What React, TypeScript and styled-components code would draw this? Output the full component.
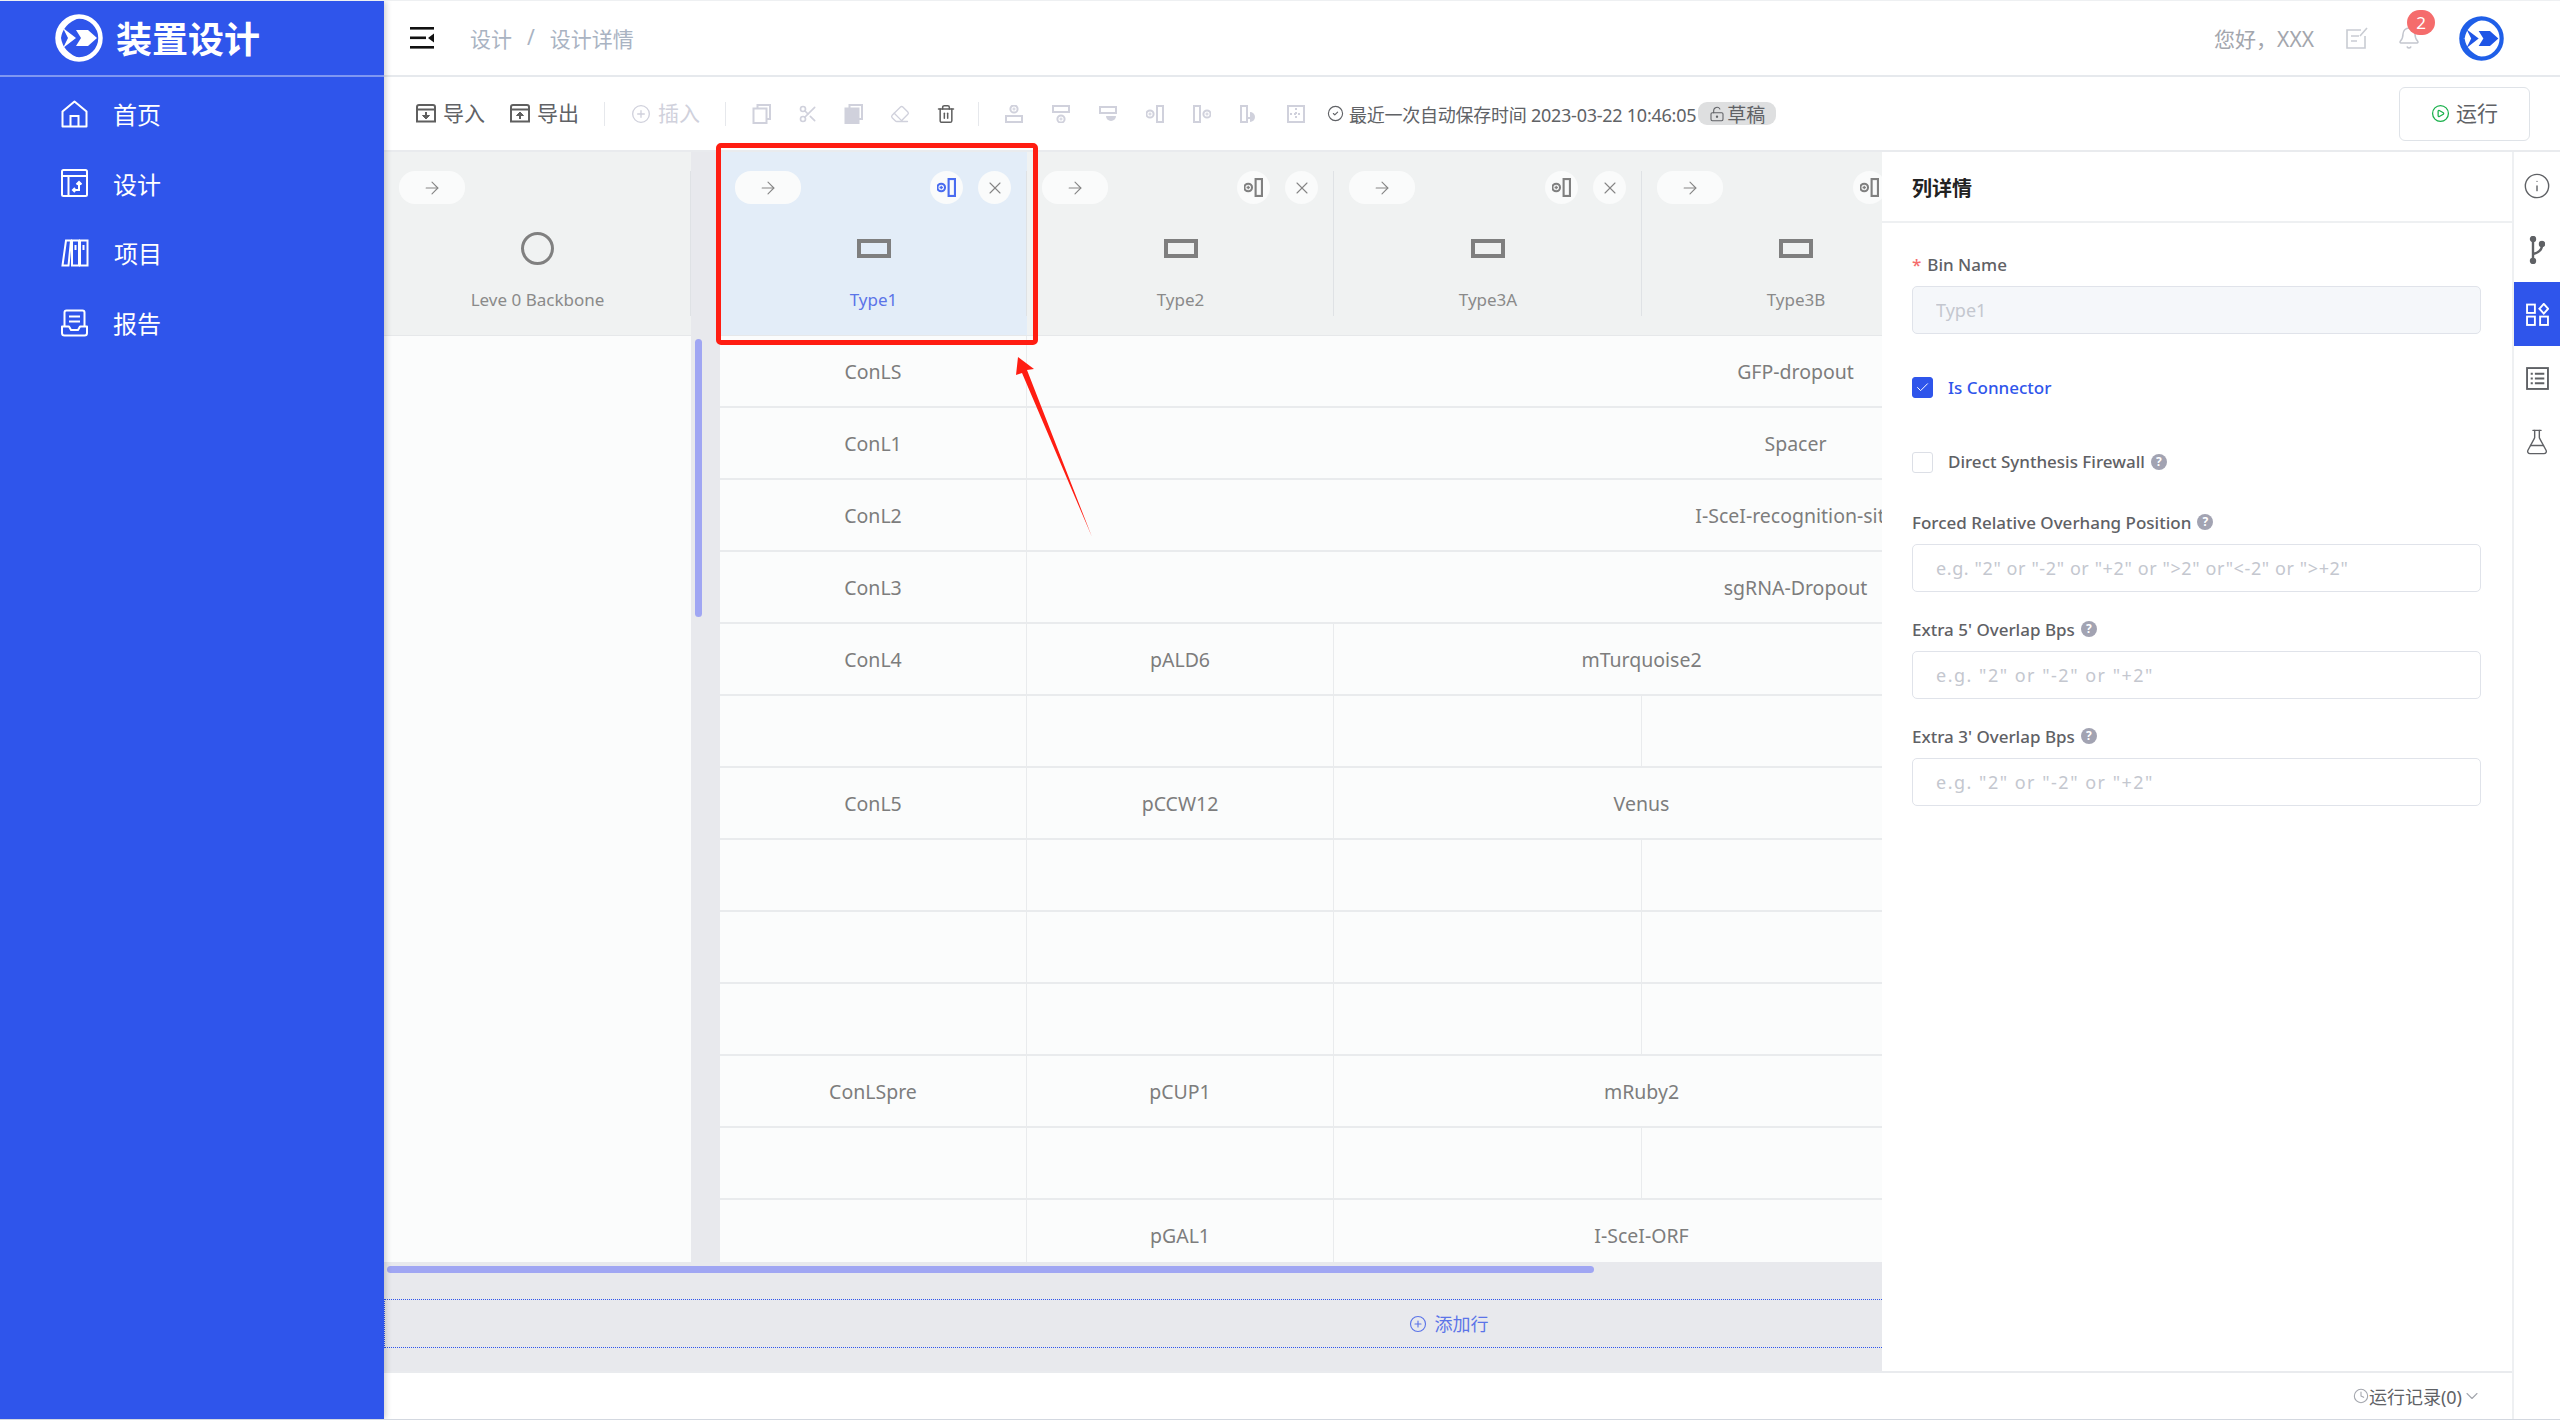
import React, { FC } from 'react';
import styled, { createGlobalStyle } from 'styled-components';
import {
  ArrowRight,
  Bell,
  Check,
  ChevronDown,
  CircleCheck,
  CirclePlay,
  CirclePlus,
  Clock,
  Eraser,
  FlaskConical,
  Info,
  LockKeyholeOpen,
  Scissors,
  Trash2,
  X,
} from 'lucide-react';

const BLUE = '#2f55eb';
const DISABLED = '#d0d1dc';

const GlobalStyle = createGlobalStyle`
  html, body {
    margin: 0;
    padding: 0;
    background: #fff;
  }
  body {
    font-family: "Noto Sans", "Noto Sans CJK SC", sans-serif;
    color: #606266;
  }
  * {
    box-sizing: border-box;
  }
`;

const Page = styled.div`
  position: relative;
  display: flex;
  width: 2560px;
  height: 1420px;
  overflow: hidden;
  border-top: 1px solid #eef0f2;
  border-bottom: 1px solid #d3d8e0;
`;

const Sidebar = styled.aside`
  position: relative;
  z-index: 2;
  flex: 0 0 384px;
  background: ${BLUE};
  box-shadow: 2px 0 6px rgba(0, 0, 0, 0.18);
`;

const Brand = styled.div`
  display: flex;
  align-items: center;
  gap: 13px;
  height: 76px;
  padding-left: 55px;
  border-bottom: 2px solid #7f97f2;
`;

const BrandName = styled.span`
  padding-top: 3px;
  color: #fff;
  font-size: 36px;
  font-weight: 700;
  line-height: 1;
`;

const Menu = styled.nav`
  padding-top: 2px;
`;

const MenuItem = styled.a`
  display: flex;
  align-items: center;
  gap: 25px;
  height: 69.6px;
  padding-left: 61px;
  color: #fff;
  font-size: 24px;
`;

const Main = styled.div`
  flex: 1;
  min-width: 0;
  display: flex;
  flex-direction: column;
`;

const TopBar = styled.header`
  flex: 0 0 76px;
  display: flex;
  align-items: center;
  padding: 0 56px 0 26px;
  border-bottom: 2px solid #e6e9ed;
`;

const Crumbs = styled.div`
  display: flex;
  gap: 15px;
  margin-left: 36px;
  color: #a9b3c2;
  font-size: 21px;
`;

const Greeting = styled.span`
  margin-left: auto;
  color: #a3a6ad;
  font-size: 21px;
`;

const NoteSlot = styled.span`
  display: flex;
  margin-left: 32px;
`;

const BellWrap = styled.span`
  position: relative;
  display: flex;
  margin: 0 38px 0 29px;
`;

const Badge = styled.span`
  position: absolute;
  left: 10px;
  top: -16px;
  width: 28px;
  height: 25px;
  border-radius: 13px;
  background: #f56c6c;
  color: #fff;
  font-size: 17px;
  line-height: 25px;
  text-align: center;
`;

const Toolbar = styled.div`
  flex: 0 0 75px;
  display: flex;
  align-items: center;
  padding: 0 30px 0 32px;
  border-bottom: 2px solid #e9ebee;
`;

const ToolButton = styled.span<{ $disabled?: boolean }>`
  display: flex;
  align-items: center;
  gap: 7px;
  margin-right: 25px;
  color: ${(p) => (p.$disabled ? DISABLED : '#606266')};
  font-size: 21px;
  line-height: 23px;
  white-space: nowrap;
`;

const ToolDivider = styled.span`
  width: 1px;
  height: 24px;
  margin: 0 26px 0 0;
  background: #e6e8ec;
`;

const IconRow = styled.span<{ $gap: number }>`
  display: flex;
  align-items: center;
  gap: ${(p) => p.$gap}px;
  margin-right: 22px;
`;

const SaveStatus = styled.span`
  display: flex;
  align-items: center;
  gap: 5px;
  color: #606266;
  font-size: 18px;
  letter-spacing: -0.25px;
  white-space: nowrap;
`;

const DraftTag = styled.span`
  display: flex;
  align-items: center;
  gap: 2px;
  height: 23px;
  margin-left: -3px;
  padding: 0 11px;
  border-radius: 9px;
  background: #dedfe0;
  font-size: 19px;
  letter-spacing: 0;
`;

const RunButton = styled.button`
  display: flex;
  align-items: center;
  justify-content: center;
  gap: 6px;
  width: 131px;
  height: 54px;
  margin-left: auto;
  border: 1px solid #dfe3e8;
  border-radius: 6px;
  background: #fff;
  color: #606266;
  font: inherit;
  font-size: 21px;
  line-height: 23px;
`;

const Content = styled.div`
  flex: 1;
  min-height: 0;
  display: flex;
`;

const Workspace = styled.div`
  flex: 1;
  min-width: 0;
  display: flex;
  flex-direction: column;
`;

const WorkRow = styled.div`
  flex: 1;
  min-height: 0;
  display: flex;
`;

const Designer = styled.section`
  flex: 0 0 1498px;
  width: 1498px;
  min-width: 0;
  display: flex;
  flex-direction: column;
  background: #e8e9ed;
`;

const Board = styled.div`
  flex: 0 0 1110px;
  min-width: 0;
  display: flex;
  overflow: hidden;
`;

const BackboneColumn = styled.div`
  flex: 0 0 307px;
  background: #fbfcfc;
`;

const Gutter = styled.div`
  flex: 0 0 29px;
  padding: 187px 0 0 4px;
  background: #e8e9ed;
`;

const VerticalThumb = styled.div`
  width: 7px;
  height: 278px;
  border-radius: 4px;
  background: #a0a6f3;
`;

const TypeArea = styled.div`
  flex: 1;
  min-width: 0;
  overflow: hidden;
`;

const ColumnGrid = styled.div`
  display: grid;
  width: 1845px;
  grid-template-columns: 307px 307px 308px 308px 308px 307px;
`;

const Head = styled.div<{ $active?: boolean }>`
  position: relative;
  display: flex;
  flex-direction: column;
  align-items: center;
  height: 184px;
  padding-top: 19px;
  background: ${(p) => (p.$active ? '#e3edf8' : '#f0f2f2')};
  border-bottom: 1px solid #e6e8ea;
  color: ${(p) => (p.$active ? '#5b74e8' : '#8a8a8a')};
  font-size: 17px;
  line-height: 24px;

  &::after {
    content: '';
    position: absolute;
    top: 19px;
    right: 0;
    bottom: 19px;
    width: 1px;
    background: #dfe2e5;
  }
`;

const HeadActions = styled.div`
  align-self: stretch;
  display: flex;
  gap: 15px;
  padding: 0 16px 0 15px;
`;

const PillButton = styled.span`
  display: flex;
  align-items: center;
  justify-content: center;
  width: 66px;
  height: 33px;
  margin-right: auto;
  border-radius: 16px;
  background: #fafbfb;
`;

const RoundButton = styled.span`
  display: flex;
  align-items: center;
  justify-content: center;
  width: 33px;
  height: 33px;
  border-radius: 50%;
  background: #fafbfb;
`;

const HeadGlyph = styled.div`
  display: flex;
  align-items: center;
  justify-content: center;
  height: 33px;
  margin: 28px 0 23px;
`;

const BackboneGlyph = styled.span`
  width: 33px;
  height: 33px;
  border: 3px solid #808080;
  border-radius: 50%;
`;

const PartGlyph = styled.span`
  width: 34px;
  height: 19px;
  border: 4px solid #7f7f7f;
`;

const Cell = styled.div<{ $span?: number }>`
  grid-column: span ${(p) => p.$span ?? 1};
  height: 72px;
  border-right: 1px solid #e9ebed;
  border-bottom: 2px solid #e9ebed;
  background: #fbfcfc;
  color: #7d7d7d;
  font-size: 19.5px;
  line-height: 72px;
  text-align: center;
  white-space: nowrap;
`;

const BoardFooter = styled.div`
  flex: 1;
  display: flex;
  flex-direction: column;
  padding-top: 4px;
`;

const HorizontalThumb = styled.div`
  width: 1207px;
  height: 7px;
  margin-left: 3px;
  border-radius: 4px;
  background: #a0a6f3;
`;

const AddRow = styled.div`
  display: flex;
  align-items: center;
  justify-content: center;
  gap: 8px;
  height: 49px;
  margin-top: 26px;
  padding-left: 630px;
  border: 1px dotted ${BLUE};
  border-right: 0;
  color: #5b74e8;
  font-size: 18px;
  line-height: 1;
`;

const DetailPanel = styled.aside`
  flex: 1;
  min-width: 0;
  background: #fff;
`;

const PanelTitle = styled.h2`
  display: flex;
  align-items: center;
  height: 71px;
  margin: 0;
  padding: 2px 30px 0;
  border-bottom: 2px solid #eef0f2;
  color: #222;
  font-size: 20px;
  font-weight: 700;
`;

const Form = styled.form`
  padding: 30px 31px 0 30px;
`;

const FieldLabel = styled.label<{ $top?: number }>`
  display: flex;
  align-items: center;
  gap: 6px;
  height: 24px;
  margin-top: ${(p) => p.$top ?? 0}px;
  padding-bottom: 2px;
  color: #5f6165;
  font-size: 17px;
  font-weight: 500;
  white-space: nowrap;
`;

const Required = styled.span`
  color: #f56c6c;
`;

const Help = styled.span`
  width: 16px;
  height: 16px;
  border-radius: 50%;
  background: #a2a3b2;
  color: #fff;
  font-size: 12px;
  font-weight: 700;
  line-height: 16px;
  text-align: center;
`;

const TextInput = styled.input<{ $spread?: number }>`
  display: block;
  width: 100%;
  height: 48px;
  margin-top: 9px;
  padding: 0 23px;
  border: 1px solid #e0e3ea;
  border-radius: 5px;
  background: #fff;
  font: inherit;
  font-size: 18px;
  letter-spacing: ${(p) => p.$spread ?? 0}px;
  outline: none;

  &::placeholder {
    color: #c4c7cf;
  }

  &:disabled {
    background: #f5f7fa;
  }
`;

const CheckRow = styled.div<{ $top: number; $checked?: boolean }>`
  display: flex;
  align-items: center;
  gap: 15px;
  height: 24px;
  margin-top: ${(p) => p.$top}px;
  padding-bottom: 1px;
  color: ${(p) => (p.$checked ? BLUE : '#5f6165')};
  font-size: 17px;
  font-weight: 500;
`;

const CheckBox = styled.span<{ $checked?: boolean }>`
  display: flex;
  align-items: center;
  justify-content: center;
  width: 21px;
  height: 21px;
  border: 1px solid ${(p) => (p.$checked ? BLUE : '#dcdfe6')};
  border-radius: 3px;
  background: ${(p) => (p.$checked ? BLUE : '#fff')};
`;

const FooterBar = styled.footer`
  flex: 0 0 48px;
  display: flex;
  align-items: center;
  justify-content: flex-end;
  padding-right: 30px;
  border-top: 2px solid #e9ebee;
  color: #606266;
  font-size: 18px;
`;

const Rail = styled.nav`
  flex: 0 0 48px;
  border-left: 2px solid #eef0f2;
  padding-top: 2px;
`;

const RailItem = styled.span<{ $active?: boolean }>`
  display: flex;
  align-items: center;
  justify-content: center;
  height: 64px;
  background: ${(p) => (p.$active ? BLUE : 'transparent')};
  color: ${(p) => (p.$active ? '#fff' : '#5f6165')};
`;

const Highlight = styled.div`
  position: absolute;
  z-index: 3;
  left: 716px;
  top: 142px;
  width: 322px;
  height: 202px;
  border: 5px solid #ff1d12;
  border-radius: 5px;
`;

const Pointer = styled.svg`
  position: absolute;
  z-index: 3;
  left: 1010px;
  top: 349px;
`;

type Glyph = { size?: number; color?: string };

const LogoMark: FC<{ size: number; ring: string; mark: string; disc: string }> = ({ size, ring, mark, disc }) => (
  <svg width={size} height={size} viewBox="0 0 48 48">
    <circle cx="24" cy="24" r="21.5" fill={disc} stroke={ring} strokeWidth="4.5" />
    <path d="M6 24 Q8 10 24 4 L24 1 Q3 3 1 24Z" fill={ring} />
    <path d="M6 24 Q8 38 24 44 L24 47 Q3 45 1 24Z" fill={ring} />
    <path d="M8 14 L21 24 L8 34 L13 24Z" fill={mark} />
    <path d="M21 16 H33 L42 24 L33 32 H21 L26 24Z" fill={mark} />
  </svg>
);

const Hamburger: FC = () => (
  <svg width="24" height="22" viewBox="0 0 24 22" fill="#111">
    <rect x="0" y="0" width="24" height="2.6" />
    <rect x="0" y="9.5" width="16" height="2.6" />
    <rect x="0" y="19" width="24" height="2.6" />
    <path d="M24 6.5 V15.5 L18 11Z" />
  </svg>
);

const HomeIcon: FC = () => (
  <svg width="27" height="28" viewBox="0 0 27 28" fill="none" stroke="#fff" strokeWidth="2">
    <path d="M1.5 11.5 L13.5 1.5 L25.5 11.5 V26.5 H1.5Z" strokeLinejoin="round" />
    <path d="M9.5 26.5 V16 H17.5 V26.5" />
  </svg>
);

const DesignIcon: FC = () => (
  <svg width="27" height="28" viewBox="0 0 27 28" fill="none" stroke="#fff" strokeWidth="2">
    <rect x="1" y="1" width="25" height="26" rx="1.5" />
    <path d="M1 7 H26 M7.5 7 V27" />
    <path d="M12 21 H18 V13 M15.5 15.5 L18 13 L20.5 15.5 M14 19 L12 21 L14 23" />
  </svg>
);

const ProjectIcon: FC = () => (
  <svg width="28" height="28" viewBox="0 0 28 28" fill="none" stroke="#fff" strokeWidth="2">
    <path d="M1.5 26.5 L5 1.5 H10 L7.5 26.5Z" />
    <rect x="11" y="1.5" width="7" height="25" />
    <rect x="19" y="1.5" width="7.5" height="25" />
    <path d="M14.5 6 V11 M22.5 6 V11" />
  </svg>
);

const ReportIcon: FC = () => (
  <svg width="27" height="28" viewBox="0 0 27 28" fill="none" stroke="#fff" strokeWidth="2">
    <path d="M3.5 17 V3.5 Q3.5 1.5 5.5 1.5 H21.5 Q23.5 1.5 23.5 3.5 V17" />
    <path d="M8 7.5 H19 M8 12.5 H19" />
    <path d="M1 17.5 H8 L10 21 H17 L19 17.5 H26 V24 Q26 26.5 23.5 26.5 H3.5 Q1 26.5 1 24Z" strokeLinejoin="round" />
  </svg>
);

const ArchiveIcon: FC<{ up?: boolean }> = ({ up }) => (
  <svg width="20" height="19" viewBox="0 0 20 19" fill="none" stroke="#5f5f5f" strokeWidth="2">
    <path d="M1 17.5 V3 Q1 1 3 1 H17 Q19 1 19 3 V17.5Z" />
    <path d="M1 5.5 H19" />
    <path d={up ? 'M10 15 V9' : 'M10 8 V14'} />
    <path d={up ? 'M6.5 11.5 L10 8 L13.5 11.5Z' : 'M6.5 11.5 L10 15 L13.5 11.5Z'} fill="#5f5f5f" strokeWidth="1" />
  </svg>
);

const CopyIcon: FC<{ filled?: boolean }> = ({ filled }) => (
  <svg width="20" height="20" viewBox="0 0 20 20" fill="none" stroke={DISABLED} strokeWidth="2">
    <path d="M5.5 4.5 V1 H18 V15 H14.5" />
    <rect x="1.5" y="4.5" width="13" height="14.5" fill={filled ? DISABLED : 'none'} />
  </svg>
);

const PlusDot: FC<{ cx: number; cy: number; color: string; r?: number }> = ({ cx, cy, color, r = 3.6 }) => (
  <g>
    <circle cx={cx} cy={cy} r={r} fill="none" stroke={color} strokeWidth="2" />
    <path d={`M${cx - 1.6} ${cy} H${cx + 1.6} M${cx} ${cy - 1.6} V${cy + 1.6}`} stroke={color} strokeWidth="1.2" />
  </g>
);

const TableTool: FC<{ kind: string; color?: string; size?: number }> = ({ kind, color = DISABLED, size = 18 }) => {
  const line = { fill: 'none', stroke: color, strokeWidth: 2 };
  return (
    <svg width={size} height={size} viewBox="0 0 18 18">
      {kind === 'rowAbove' && (
        <>
          <PlusDot cx={9} cy={4} color={color} />
          <rect x="1" y="11" width="16" height="6" {...line} />
        </>
      )}
      {kind === 'rowBelow' && (
        <>
          <rect x="1" y="1" width="16" height="6" {...line} />
          <PlusDot cx={9} cy={14} color={color} />
        </>
      )}
      {kind === 'rowDelete' && (
        <>
          <rect x="1" y="2" width="16" height="6" {...line} />
          <path d="M7 11 H17 A5 5 0 0 1 7 11Z" fill={color} />
        </>
      )}
      {kind === 'colLeft' && (
        <>
          <PlusDot cx={4} cy={9} color={color} />
          <rect x="11" y="1" width="6" height="16" {...line} />
        </>
      )}
      {kind === 'colRight' && (
        <>
          <rect x="1" y="1" width="6" height="16" {...line} />
          <PlusDot cx={14} cy={9} color={color} />
        </>
      )}
      {kind === 'colDelete' && (
        <>
          <rect x="1" y="1" width="6" height="16" {...line} />
          <path d="M10 7 A5 5 0 0 1 10 17Z" fill={color} />
          <path d="M7 13 H10" stroke={color} strokeWidth="2" />
        </>
      )}
      {kind === 'merge' && (
        <>
          <rect x="1" y="1" width="16" height="16" {...line} />
          <path d="M9 3 V15 M3 9 H15" stroke={color} strokeWidth="2" strokeDasharray="2 2" />
        </>
      )}
    </svg>
  );
};

const NoteIcon: FC<Glyph> = ({ color = '#c9ccd3' }) => (
  <svg width="22" height="22" viewBox="0 0 22 22" fill="none" stroke={color} strokeWidth="1.6">
    <path d="M15 3 H1 V21 H19 V9" />
    <path d="M5 9 H13 M5 14 H11 M14 9 L21 1" />
  </svg>
);

const BranchIcon: FC = () => (
  <svg width="16" height="28" viewBox="0 0 16 28" fill="none" stroke="#5f6165" strokeWidth="2.4">
    <path d="M4 3 V25" />
    <path d="M4 18 Q13 16 13 9" />
    <circle cx="4" cy="3" r="2" fill="#5f6165" />
    <circle cx="4" cy="25" r="2" fill="#5f6165" />
    <circle cx="13" cy="8" r="2" fill="#5f6165" />
  </svg>
);

const ShapesIcon: FC = () => (
  <svg width="23" height="23" viewBox="0 0 22 22" fill="none" stroke="#fff" strokeWidth="1.8">
    <rect x="1" y="1.5" width="7.5" height="8" />
    <rect x="1" y="13" width="7.5" height="8" />
    <rect x="13.5" y="13" width="7.5" height="8" />
    <path d="M17 0.8 L21.2 5.5 L17 10.2 L12.8 5.5Z" />
  </svg>
);

const ListIcon: FC = () => (
  <svg width="23" height="23" viewBox="0 0 22 22" fill="none" stroke="#5f6165" strokeWidth="1.8">
    <rect x="1" y="1" width="20" height="20" />
    <path d="M4.5 6.5 H6.5 M4.5 11 H6.5 M4.5 15.5 H6.5 M8.5 6.5 H17.5 M8.5 11 H17.5 M8.5 15.5 H17.5" />
  </svg>
);

const Arrow: FC = () => <ArrowRight size={20} color="#858585" strokeWidth={1.3} />;

interface TypeColumn {
  name: string;
  active?: boolean;
}

const typeColumns: TypeColumn[] = [
  { name: 'Type1', active: true },
  { name: 'Type2' },
  { name: 'Type3A' },
  { name: 'Type3B' },
];

interface RowCell {
  text?: string;
  span?: number;
}

const blockRow = (first: string, text: string): RowCell[] => [{ text: first }, { text, span: 5 }];
const partRow = (first: string, second: string, third: string): RowCell[] => [
  { text: first },
  { text: second },
  { text: third, span: 2 },
  {},
  {},
];
const emptyRow = (): RowCell[] => [{}, {}, {}, {}, {}, {}];

const rows: RowCell[][] = [
  blockRow('ConLS', 'GFP-dropout'),
  blockRow('ConL1', 'Spacer'),
  blockRow('ConL2', 'I-SceI-recognition-site'),
  blockRow('ConL3', 'sgRNA-Dropout'),
  partRow('ConL4', 'pALD6', 'mTurquoise2'),
  emptyRow(),
  partRow('ConL5', 'pCCW12', 'Venus'),
  emptyRow(),
  emptyRow(),
  emptyRow(),
  partRow('ConLSpre', 'pCUP1', 'mRuby2'),
  emptyRow(),
  partRow('', 'pGAL1', 'I-SceI-ORF'),
];

const App: FC = () => {
  return (
    <Page>
      <GlobalStyle />
      <Sidebar>
        <Brand>
          <LogoMark size={48} ring="#fff" mark="#fff" disc={BLUE} />
          <BrandName>装置设计</BrandName>
        </Brand>
        <Menu>
          <MenuItem><HomeIcon />首页</MenuItem>
          <MenuItem><DesignIcon />设计</MenuItem>
          <MenuItem><ProjectIcon />项目</MenuItem>
          <MenuItem><ReportIcon />报告</MenuItem>
        </Menu>
      </Sidebar>

      <Main>
        <TopBar>
          <Hamburger />
          <Crumbs>
            <span>设计</span>
            <span>/</span>
            <span>设计详情</span>
          </Crumbs>
          <Greeting>您好，XXX</Greeting>
          <NoteSlot><NoteIcon /></NoteSlot>
          <BellWrap>
            <Bell size={24} color="#c3c6ce" strokeWidth={1.5} />
            <Badge>2</Badge>
          </BellWrap>
          <LogoMark size={45} ring="#1f5fe8" mark="#1f55e6" disc="#fff" />
        </TopBar>

        <Toolbar>
          <ToolButton><ArchiveIcon />导入</ToolButton>
          <ToolButton><ArchiveIcon up />导出</ToolButton>
          <ToolDivider />
          <ToolButton $disabled><CirclePlus size={20} strokeWidth={1.6} />插入</ToolButton>
          <ToolDivider />
          <IconRow $gap={26}>
            <CopyIcon />
            <Scissors size={20} color={DISABLED} strokeWidth={2} />
            <CopyIcon filled />
            <Eraser size={20} color={DISABLED} strokeWidth={1.6} />
            <Trash2 size={20} color="#5f5f5f" strokeWidth={1.8} />
          </IconRow>
          <ToolDivider />
          <IconRow $gap={29}>
            <TableTool kind="rowAbove" />
            <TableTool kind="rowBelow" />
            <TableTool kind="rowDelete" />
            <TableTool kind="colLeft" />
            <TableTool kind="colRight" />
            <TableTool kind="colDelete" />
            <TableTool kind="merge" />
          </IconRow>
          <SaveStatus>
            <CircleCheck size={17} color="#606266" strokeWidth={1.6} />
            最近一次自动保存时间 2023-03-22 10:46:05
            <DraftTag>
              <LockKeyholeOpen size={16} color="#606266" strokeWidth={1.6} />
              草稿
            </DraftTag>
          </SaveStatus>
          <RunButton>
            <CirclePlay size={19} color="#19b04b" strokeWidth={1.6} />
            运行
          </RunButton>
        </Toolbar>

        <Content>
          <Workspace>
            <WorkRow>
              <Designer>
                <Board>
                  <BackboneColumn>
                    <Head>
                      <HeadActions>
                        <PillButton><Arrow /></PillButton>
                      </HeadActions>
                      <HeadGlyph><BackboneGlyph /></HeadGlyph>
                      Leve 0 Backbone
                    </Head>
                  </BackboneColumn>
                  <Gutter>
                    <VerticalThumb />
                  </Gutter>
                  <TypeArea>
                    <ColumnGrid>
                      {typeColumns.map((column) => (
                        <Head key={column.name} $active={column.active}>
                          <HeadActions>
                            <PillButton><Arrow /></PillButton>
                            <RoundButton>
                              <TableTool kind="colLeft" size={19} color={column.active ? '#4a6cf0' : '#808080'} />
                            </RoundButton>
                            <RoundButton><X size={20} color="#858585" strokeWidth={1.3} /></RoundButton>
                          </HeadActions>
                          <HeadGlyph><PartGlyph /></HeadGlyph>
                          {column.name}
                        </Head>
                      ))}
                    </ColumnGrid>
                    {rows.map((row, rowIndex) => (
                      <ColumnGrid key={rowIndex}>
                        {row.map((cell, cellIndex) => (
                          <Cell key={cellIndex} $span={cell.span}>{cell.text}</Cell>
                        ))}
                      </ColumnGrid>
                    ))}
                  </TypeArea>
                </Board>
                <BoardFooter>
                  <HorizontalThumb />
                  <AddRow>
                    <CirclePlus size={18} color="#5b74e8" strokeWidth={1.5} />
                    添加行
                  </AddRow>
                </BoardFooter>
              </Designer>

              <DetailPanel>
                <PanelTitle>列详情</PanelTitle>
                <Form>
                  <FieldLabel><Required>*</Required>Bin Name</FieldLabel>
                  <TextInput disabled placeholder="Type1" />
                  <CheckRow $top={42} $checked>
                    <CheckBox $checked><Check size={15} color="#fff" strokeWidth={1.6} /></CheckBox>
                    Is Connector
                  </CheckRow>
                  <CheckRow $top={51}>
                    <CheckBox />
                    <FieldLabel as="span">Direct Synthesis Firewall<Help>?</Help></FieldLabel>
                  </CheckRow>
                  <FieldLabel $top={36}>Forced Relative Overhang Position<Help>?</Help></FieldLabel>
                  <TextInput $spread={0.6} placeholder={'e.g. "2" or "-2" or "+2" or ">2" or"<-2" or ">+2"'} />
                  <FieldLabel $top={26}>Extra 5' Overlap Bps<Help>?</Help></FieldLabel>
                  <TextInput $spread={1.5} placeholder={'e.g. "2" or "-2" or "+2"'} />
                  <FieldLabel $top={26}>Extra 3' Overlap Bps<Help>?</Help></FieldLabel>
                  <TextInput $spread={1.5} placeholder={'e.g. "2" or "-2" or "+2"'} />
                </Form>
              </DetailPanel>
            </WorkRow>
            <FooterBar>
              <Clock size={16} color="#a3a6ad" strokeWidth={1.6} />
              运行记录(0)
              <ChevronDown size={20} color="#a3a6ad" strokeWidth={1.3} />
            </FooterBar>
          </Workspace>

          <Rail>
            <RailItem><Info size={28} strokeWidth={1.2} /></RailItem>
            <RailItem><BranchIcon /></RailItem>
            <RailItem $active><ShapesIcon /></RailItem>
            <RailItem><ListIcon /></RailItem>
            <RailItem><FlaskConical size={28} strokeWidth={1.2} /></RailItem>
          </Rail>
        </Content>
      </Main>

      <Highlight />
      <Pointer width="90" height="192" viewBox="0 0 90 192">
        <polygon points="8,7 24,19 17,20 82,187 12,23 6,25" fill="#ff1d12" />
      </Pointer>
    </Page>
  );
};

export default App;
